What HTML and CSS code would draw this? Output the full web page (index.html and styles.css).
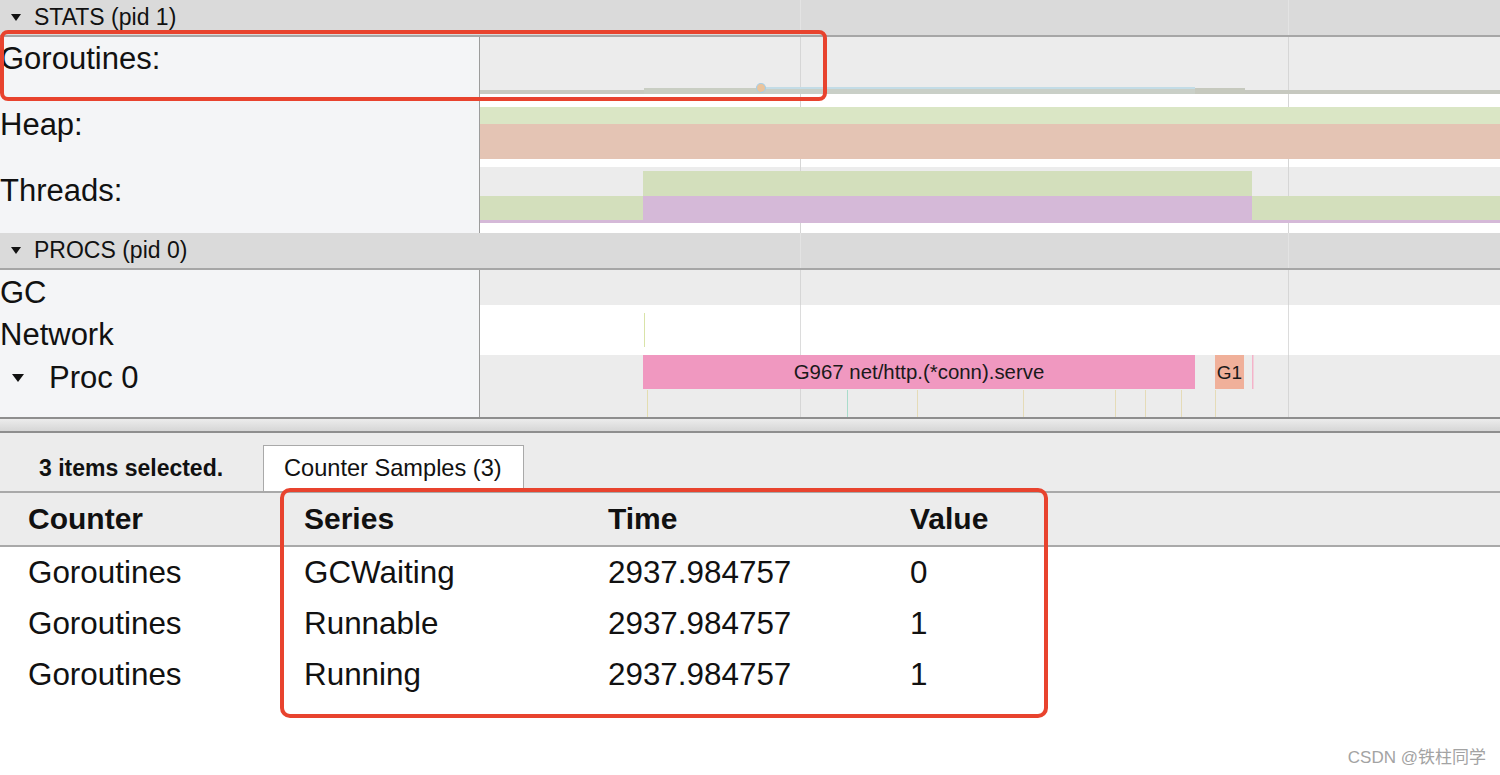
FILE: index.html
```html
<!DOCTYPE html>
<html>
<head>
<meta charset="utf-8">
<link rel="stylesheet" href="styles.css">
</head>
<body>
<div class="app">
  <div class="timeline">
    <div class="sec-head">
      <svg class="tri" width="10" height="7" viewBox="0 0 10 7"><path d="M0 0 L10 0 L5 7 Z" fill="#111"/></svg>
      <span>STATS (pid 1)</span>
    </div>
    <div class="sec-body">
      <div class="labels stats-labels">
        <div class="lbl">Goroutines:</div>
        <div class="lbl">Heap:</div>
        <div class="lbl">Threads:</div>
      </div>
      <div class="tracks">
        <svg class="track" width="1020" height="70" viewBox="0 0 1020 70">
          <rect x="0" y="0" width="1020" height="57" fill="#ececec"/>
          <rect x="320" y="0" width="1" height="70" fill="#d6d6d6"/>
          <rect x="808" y="0" width="1" height="70" fill="#d6d6d6"/>
          <rect x="0" y="53" width="164" height="4" fill="#c8cac0"/>
          <rect x="164" y="51" width="117" height="6" fill="#c9cec3"/>
          <rect x="281" y="50" width="434" height="2" fill="#c3dce6"/>
          <rect x="281" y="52" width="434" height="5" fill="#c9cfc7"/>
          <rect x="715" y="51" width="50" height="6" fill="#c6c9be"/>
          <rect x="765" y="53" width="255" height="4" fill="#c6c8bf"/>
          <circle cx="281" cy="51" r="4.5" fill="#ebc49c" stroke="#a8cfe6" stroke-width="1.2"/>
        </svg>
        <svg class="track" width="1020" height="60" viewBox="0 0 1020 60">
          <rect x="320" y="0" width="1" height="60" fill="#d6d6d6"/>
          <rect x="808" y="0" width="1" height="60" fill="#d6d6d6"/>
          <rect x="0" y="0" width="1020" height="17" fill="#dae6c5"/>
          <rect x="0" y="17" width="1020" height="35" fill="#e4c4b4"/>
        </svg>
        <svg class="track" width="1020" height="66" viewBox="0 0 1020 66">
          <rect x="0" y="0" width="1020" height="56" fill="#ececec"/>
          <rect x="320" y="0" width="1" height="66" fill="#d6d6d6"/>
          <rect x="808" y="0" width="1" height="66" fill="#d6d6d6"/>
          <rect x="0" y="29" width="163" height="24" fill="#d3dfbc"/>
          <rect x="0" y="53" width="163" height="3" fill="#d5b9d8"/>
          <rect x="163" y="4" width="609" height="25" fill="#d3dfbc"/>
          <rect x="163" y="29" width="609" height="27" fill="#d5b9d8"/>
          <rect x="772" y="29" width="248" height="24" fill="#d3dfbc"/>
          <rect x="772" y="53" width="248" height="3" fill="#d5b9d8"/>
        </svg>
      </div>
    </div>

    <div class="sec-head">
      <svg class="tri" width="10" height="7" viewBox="0 0 10 7"><path d="M0 0 L10 0 L5 7 Z" fill="#111"/></svg>
      <span>PROCS (pid 0)</span>
    </div>
    <div class="sec-body">
      <div class="labels procs-labels">
        <div class="lbl">GC</div>
        <div class="lbl">Network</div>
        <div class="lbl proc"><svg class="tri-big" width="12" height="8" viewBox="0 0 12 8"><path d="M0 0 L12 0 L6 8 Z" fill="#111"/></svg><span>Proc 0</span></div>
      </div>
      <div class="tracks">
        <svg class="track" width="1020" height="35" viewBox="0 0 1020 35">
          <rect x="0" y="0" width="1020" height="35" fill="#ececec"/>
          <rect x="320" y="0" width="1" height="35" fill="#d6d6d6"/>
          <rect x="808" y="0" width="1" height="35" fill="#d6d6d6"/>
        </svg>
        <svg class="track" width="1020" height="50" viewBox="0 0 1020 50">
          <rect x="320" y="0" width="1" height="50" fill="#dcdcdc"/>
          <rect x="808" y="0" width="1" height="50" fill="#dcdcdc"/>
          <rect x="164" y="8" width="1" height="34" fill="#d9e3a8"/>
        </svg>
        <svg class="track" width="1020" height="62" viewBox="0 0 1020 62">
          <rect x="0" y="0" width="1020" height="62" fill="#ececec"/>
          <rect x="320" y="0" width="1" height="62" fill="#d6d6d6"/>
          <rect x="808" y="0" width="1" height="62" fill="#d6d6d6"/>
          <rect x="163" y="0" width="552" height="34" fill="#f098c0"/>
          <text class="slice-text" x="439" y="24" text-anchor="middle">G967 net/http.(*conn).serve</text>
          <rect x="735" y="0" width="29" height="34" fill="#f0b09a"/>
          <text class="slice-text small" x="749.5" y="24" text-anchor="middle">G1</text>
          <rect x="772" y="0" width="1.5" height="34" fill="#f4b3c9"/>
          <rect x="167" y="35" width="1" height="27" fill="#e3ddb0"/>
          <rect x="367" y="35" width="1" height="27" fill="#a9dccb"/>
          <rect x="437" y="35" width="1" height="27" fill="#e5dbb7"/>
          <rect x="543" y="35" width="1" height="27" fill="#e5dbb7"/>
          <rect x="635" y="35" width="1" height="27" fill="#e5dbb7"/>
          <rect x="665" y="35" width="1" height="27" fill="#e5dbb7"/>
          <rect x="701" y="35" width="1" height="27" fill="#e5dbb7"/>
          <rect x="735" y="35" width="1" height="27" fill="#e5dbb7"/>
        </svg>
      </div>
    </div>
  </div>

  <div class="splitter"></div>

  <div class="bottom">
    <div class="tabbar">
      <div class="sel">3 items selected.</div>
      <div class="tab">Counter Samples (3)</div>
    </div>
    <table class="samples">
      <thead>
        <tr><th class="c1">Counter</th><th class="c2">Series</th><th class="c3">Time</th><th class="c4">Value</th></tr>
      </thead>
      <tbody>
        <tr><td>Goroutines</td><td>GCWaiting</td><td>2937.984757</td><td>0</td></tr>
        <tr><td>Goroutines</td><td>Runnable</td><td>2937.984757</td><td>1</td></tr>
        <tr><td>Goroutines</td><td>Running</td><td>2937.984757</td><td>1</td></tr>
      </tbody>
    </table>
  </div>

  <div class="mark mark-top"></div>
  <div class="mark mark-table"></div>
  <div class="watermark">CSDN @铁柱同学</div>
</div>
</body>
</html>
```

FILE: styles.css
```css
html, body {
  margin: 0;
  padding: 0;
}

body {
  width: 1500px;
  height: 775px;
  overflow: hidden;
  background: #ffffff;
  font-family: "Liberation Sans", Arial, "Noto Sans CJK SC", sans-serif;
  color: #111111;
}

.app {
  position: relative;
  width: 1500px;
  height: 775px;
  display: flex;
  flex-direction: column;
}

.timeline {
  display: flex;
  flex-direction: column;
}

.sec-head {
  height: 35px;
  border-bottom: 2px solid #a6a6a6;
  background-color: #dadada;
  background-image:
    linear-gradient(#e3e3e3, #e3e3e3),
    linear-gradient(#e3e3e3, #e3e3e3);
  background-size: 1px 100%, 1px 100%;
  background-position: 800px 0, 1288px 0;
  background-repeat: no-repeat;
  display: flex;
  align-items: center;
  padding-left: 11px;
  gap: 13px;
  font-size: 23px;
  color: #111;
}

.tri {
  display: block;
  flex: none;
}

.sec-body {
  display: flex;
}

.labels {
  width: 479px;
  flex: none;
  border-right: 1px solid #9c9c9c;
  background: #f4f5f7;
  display: flex;
  flex-direction: column;
  font-size: 31px;
}

.stats-labels {
  gap: 22px;
}

.stats-labels .lbl {
  line-height: 44px;
}

.procs-labels {
  padding-top: 2px;
}

.procs-labels .lbl {
  line-height: 42px;
}

.lbl {
  padding-left: 0;
  white-space: nowrap;
}

.lbl.proc {
  display: flex;
  align-items: center;
  padding-left: 12px;
  gap: 25px;
  margin-top: 1px;
}

.tri-big {
  display: block;
  flex: none;
}

.tracks {
  display: flex;
  flex-direction: column;
  flex: 1;
  background: #ffffff;
}

.track {
  display: block;
}

.slice-text {
  font-family: "Liberation Sans", Arial, sans-serif;
  font-size: 20.4px;
  fill: #1a1a1a;
}

.slice-text.small {
  font-size: 19px;
}

.splitter {
  height: 12px;
  border-top: 2px solid #8e8e8e;
  border-bottom: 2px solid #8e8e8e;
  background: linear-gradient(#ececec, #d6d6d6);
}

.bottom {
  flex: 1;
  display: flex;
  flex-direction: column;
  background: #ffffff;
}

.tabbar {
  height: 58px;
  background: #ececec;
  display: flex;
  align-items: flex-end;
}

.sel {
  width: 224px;
  padding-left: 39px;
  line-height: 46px;
  font-size: 23px;
  font-weight: bold;
  color: #111;
}

.tab {
  height: 45px;
  line-height: 44px;
  padding: 0 21px 0 20px;
  background: #ffffff;
  border: 1px solid #a9a9a9;
  border-bottom: none;
  font-size: 23.6px;
  color: #111;
}

.samples {
  width: 100%;
  border-collapse: collapse;
  table-layout: fixed;
}

.samples th {
  background: #ececec;
  border-top: 2px solid #a9a9a9;
  border-bottom: 2px solid #a9a9a9;
  height: 52px;
  padding: 0;
  text-align: left;
  font-size: 30px;
  font-weight: bold;
  color: #111;
}

.samples td {
  height: 51px;
  padding: 0;
  font-size: 31.4px;
  color: #111;
  white-space: nowrap;
}

.samples .c1 { width: 276px; }
.samples .c2 { width: 304px; }
.samples .c3 { width: 302px; }

.samples th:first-child,
.samples td:first-child {
  padding-left: 28px;
}

.mark {
  position: absolute;
  box-sizing: border-box;
  border: 4px solid #e8432e;
  pointer-events: none;
}

.mark-top {
  left: 0;
  top: 30px;
  width: 827px;
  height: 71px;
  border-radius: 8px;
}

.mark-table {
  left: 280px;
  top: 488px;
  width: 768px;
  height: 230px;
  border-radius: 10px;
}

.watermark {
  position: absolute;
  right: 14px;
  bottom: 7px;
  font-size: 17px;
  color: #a3a3a3;
  font-family: "Liberation Sans", Arial, "Noto Sans CJK SC", sans-serif;
}
```
